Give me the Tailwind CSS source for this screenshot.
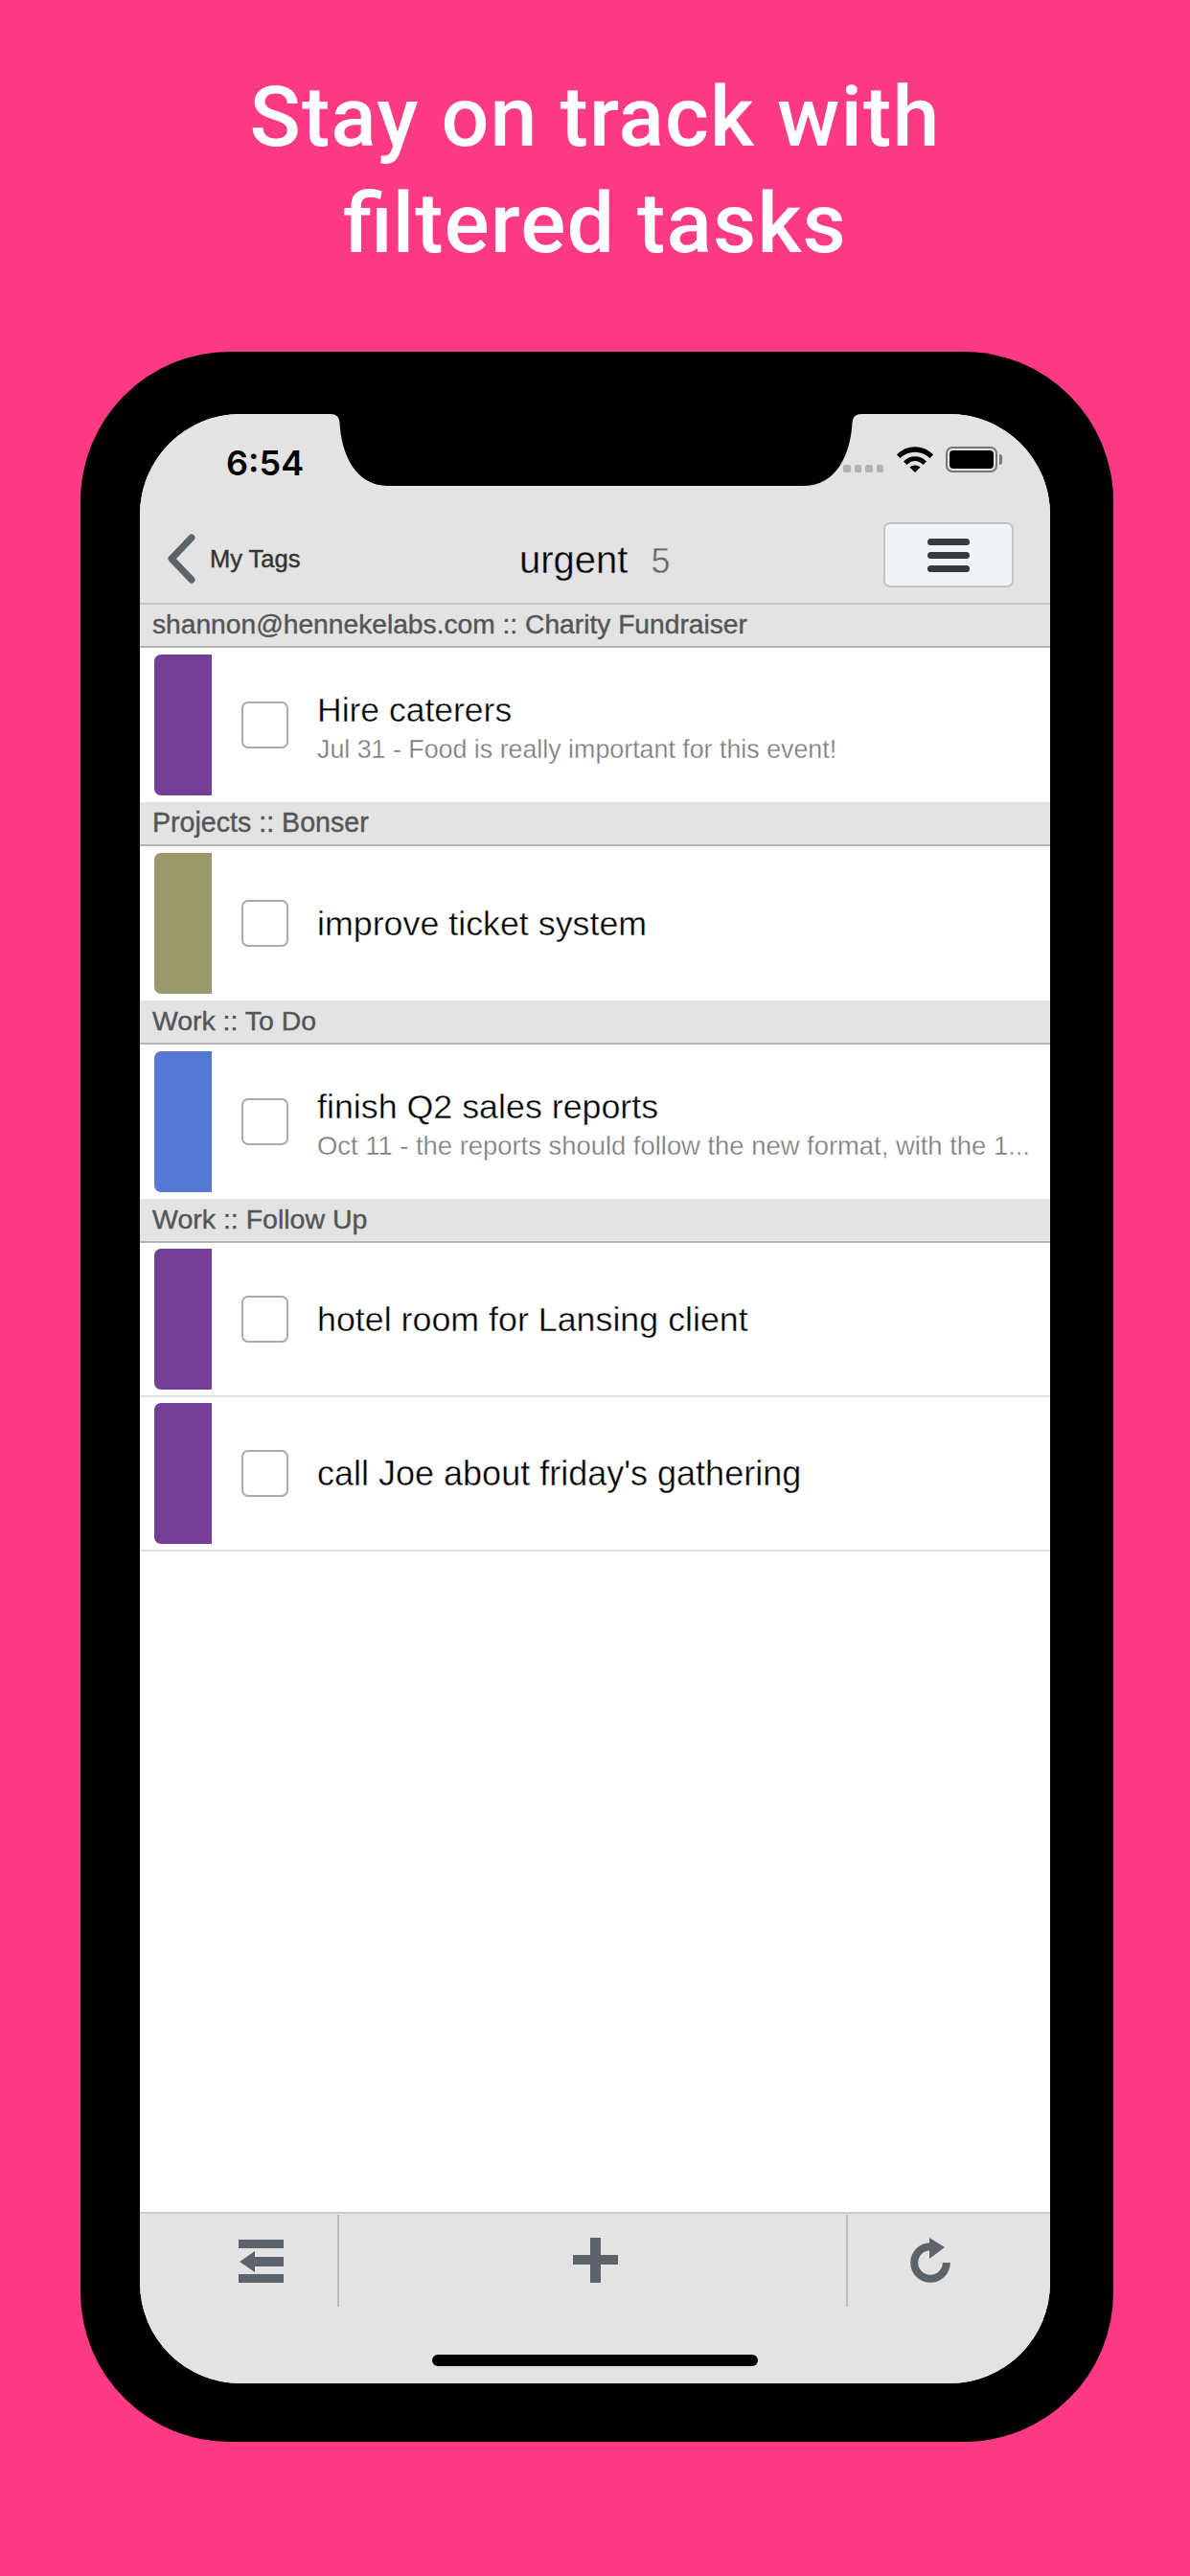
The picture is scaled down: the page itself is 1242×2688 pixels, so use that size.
<!DOCTYPE html>
<html>
<head>
<meta charset="utf-8">
<script src="https://cdn.jsdelivr.net/npm/@tailwindcss/browser@4"></script>
</head>
<body class="m-0 bg-[#ff3a85]">
<div class="relative w-[1242px] h-[2688px] overflow-hidden bg-[#ff3a85] font-['Liberation_Sans',sans-serif]">
  <h1 class="pt-[66px] h-[367px] text-center text-white text-[88px] leading-[111px] font-medium font-['Roboto',sans-serif] tracking-[1.1px]">Stay on track with<br><span class="tracking-normal">fi</span>ltered tasks</h1>

  <div class="relative mx-[84px] w-[1078px] h-[2181px] bg-black rounded-[156px] pt-[65px] px-[62px]">
    <div class="relative w-[950px] h-[2055px] bg-white rounded-[105px] overflow-hidden flex flex-col">
      <!-- status + nav -->
      <div class="h-[199px] bg-[#e3e3e3] relative shrink-0 border-b-2 border-[#c6c6c6]">
        <span class="absolute left-[90px] top-[29px] font-['Inter',sans-serif] font-semibold text-[36px] leading-[44px] text-black">6:54</span>
        <div class="absolute left-[734px] top-[53px] flex gap-[4px]">
          <i class="block size-[7.5px] rounded-[2px] bg-[#b2b2b2]"></i><i class="block size-[7.5px] rounded-[2px] bg-[#b2b2b2]"></i><i class="block size-[7.5px] rounded-[2px] bg-[#b2b2b2]"></i><i class="block size-[7.5px] rounded-[2px] bg-[#b2b2b2]"></i>
        </div>
        <svg class="absolute left-[789px] top-[33px]" width="40" height="29" viewBox="0 0 40 29"><path d="M1 9.5C11 -1.5 29 -1.5 39 9.5L35.5 13C27 4.500 13 4.500 4.500 13Z M8 16.500C14.500 9.500 25.500 9.500 32 16.500L28.500 20C23.500 14.500 16.500 14.500 11.500 20Z M14.500 22.500 C17.500 19.800 22.500 19.800 25.500 22.500L20 28Z" fill="#000"/></svg>
        <div class="absolute left-[841px] top-[34px] w-[54px] h-[27px] rounded-[7px] border-2 border-[#777] p-[2px]"><div class="h-full rounded-[4px] bg-black"></div></div>
        <div class="absolute left-[897px] top-[42px] w-[3px] h-[11px] rounded-r-[3px] bg-[#777]"></div>

        <svg class="absolute left-[28px] top-[125px]" width="30" height="52" viewBox="0 0 30 52"><path d="M26 4 5 26 26 48" fill="none" stroke="#5c636a" stroke-width="7" stroke-linecap="round" stroke-linejoin="round"/></svg>
        <span class="absolute left-[73px] top-[136px] text-[25.500px] leading-[30px] text-[#333] [-webkit-text-stroke:0.4px_#333]">My Tags</span>
        <div class="absolute left-[396px] top-[129px] flex items-baseline text-[40px] leading-[46px] [-webkit-text-stroke:0.4px_#e3e3e3]">
          <span class="text-black">urgent</span><span class="ml-[24px] text-[#666] text-[36px] [-webkit-text-stroke:0.5px_#e3e3e3]">5</span>
        </div>
        <div class="absolute left-[776px] top-[113px] w-[136px] h-[68px] rounded-[7px] border-2 border-[#c2c5c8] bg-[#f1f3f5] flex flex-col items-center justify-center gap-[7px]">
          <i class="block w-[44px] h-[7px] rounded-full bg-[#343a40]"></i><i class="block w-[44px] h-[7px] rounded-full bg-[#343a40]"></i><i class="block w-[44px] h-[7px] rounded-full bg-[#343a40]"></i>
        </div>
      </div>

      <!-- list -->
      <div class="flex-1 flex flex-col">
        <div class="h-[45px] shrink-0 bg-[#e3e3e3] border-b-2 border-[#b4b4b4] pl-[13px] text-[28.200px] leading-[41px] text-[#555] [-webkit-text-stroke:0.4px_#555]">shannon@hennekelabs.com :: Charity Fundraiser</div>
        <div class="h-[161px] shrink-0 flex items-center pl-[15px]">
          <div class="w-[60px] h-[147px] rounded-l-[7px] bg-[#733e96]"></div>
          <div class="ml-[31px] size-[49px] rounded-[7px] border-2 border-[#aaa]"></div>
          <div class="ml-[30px] min-w-0 w-[750px] pt-[4px]">
            <div class="text-[35.500px] leading-[44px] text-black [-webkit-text-stroke:0.4px_white]">Hire caterers</div>
            <div class="mt-[2px] text-[26.800px] leading-[34px] text-[#7c7c7c] [-webkit-text-stroke:0.3px_white]">Jul 31 - Food is really important for this event!</div>
          </div>
        </div>

        <div class="h-[46px] shrink-0 bg-[#e3e3e3] border-b-2 border-[#b4b4b4] pl-[13px] text-[28.600px] leading-[42px] text-[#555] [-webkit-text-stroke:0.4px_#555]">Projects :: Bonser</div>
        <div class="h-[161px] shrink-0 flex items-center pl-[15px]">
          <div class="w-[60px] h-[147px] rounded-l-[7px] bg-[#99996b]"></div>
          <div class="ml-[31px] size-[49px] rounded-[7px] border-2 border-[#aaa]"></div>
          <div class="ml-[30px] text-[35.800px] leading-[44px] text-black [-webkit-text-stroke:0.4px_white]">improve ticket system</div>
        </div>

        <div class="h-[46px] shrink-0 bg-[#e3e3e3] border-b-2 border-[#b4b4b4] pl-[13px] text-[28.400px] leading-[42px] text-[#555] [-webkit-text-stroke:0.4px_#555]">Work :: To Do</div>
        <div class="h-[161px] shrink-0 flex items-center pl-[15px]">
          <div class="w-[60px] h-[147px] rounded-l-[7px] bg-[#5578d4]"></div>
          <div class="ml-[31px] size-[49px] rounded-[7px] border-2 border-[#aaa]"></div>
          <div class="ml-[30px] min-w-0 w-[760px] pt-[4px]">
            <div class="text-[35.800px] leading-[44px] text-black [-webkit-text-stroke:0.4px_white]">finish Q2 sales reports</div>
            <div class="mt-[2px] text-[27.400px] leading-[34px] text-[#7c7c7c] whitespace-nowrap [-webkit-text-stroke:0.3px_white]">Oct 11 - the reports should follow the new format, with the 1...</div>
          </div>
        </div>

        <div class="h-[46px] shrink-0 bg-[#e3e3e3] border-b-2 border-[#b4b4b4] pl-[13px] text-[28.500px] leading-[42px] text-[#555] [-webkit-text-stroke:0.4px_#555]">Work :: Follow Up</div>
        <div class="h-[161px] shrink-0 flex items-center pl-[15px] border-b-2 border-[#e0e0e6]">
          <div class="w-[60px] h-[147px] rounded-l-[7px] bg-[#733e96]"></div>
          <div class="ml-[31px] size-[49px] rounded-[7px] border-2 border-[#aaa]"></div>
          <div class="ml-[30px] text-[35.800px] leading-[44px] text-black [-webkit-text-stroke:0.4px_white]">hotel room for Lansing client</div>
        </div>
        <div class="h-[161px] shrink-0 flex items-center pl-[15px] border-b-2 border-[#e0e0e6]">
          <div class="w-[60px] h-[147px] rounded-l-[7px] bg-[#733e96]"></div>
          <div class="ml-[31px] size-[49px] rounded-[7px] border-2 border-[#aaa]"></div>
          <div class="ml-[30px] text-[36px] leading-[44px] text-black [-webkit-text-stroke:0.4px_white]">call Joe about friday's gathering</div>
        </div>
      </div>

      <!-- toolbar -->
      <div class="relative h-[179px] shrink-0 bg-[#e3e3e3] border-t-2 border-[#cbcbcb] flex items-start pt-[1px]">
        <div class="w-[208px] h-[96px] border-r-2 border-[#bdbdbd] flex justify-center pt-[26px]">
          <svg width="47" height="45" viewBox="0 0 47 45" class="ml-[46px]"><path d="M0 0H47V9H0Z M0 36H47V45H0Z M17 18H47V28H17Z M17 12V34L1 23Z" fill="#5c636a"/></svg>
        </div>
        <div class="w-[531px] h-[96px] border-r-2 border-[#bdbdbd] flex justify-center pt-[24px]">
          <svg width="47" height="47" viewBox="0 0 47 47" class="ml-[6px]"><path d="M18 0H29V18H47V28H29V47H18V28H0V18H18Z" fill="#5c636a"/></svg>
        </div>
        <div class="flex-1 flex justify-center pt-[24px]">
          <svg width="42" height="47" viewBox="0 0 42 47" class="ml-[-40px]"><path d="M21 9.200A16.800 16.800 0 1 0 37.800 26" fill="none" stroke="#5c636a" stroke-width="8"/><path d="M20 0 36 10 20 22Z" fill="#5c636a"/></svg>
        </div>
        <div class="absolute left-[305px] top-[147px] w-[340px] h-[12px] rounded-full bg-black"></div>
      </div>
    </div>
    <svg class="absolute left-[261px] top-[65px]" width="554" height="75" viewBox="0 0 554 75"><path d="M0 0Q9 0 9.500 9C11 40 25 75 60 75L494 75C529 75 543 40 544.500 9Q545 0 554 0Z" fill="#000"/></svg>
  </div>
</div>
</body>
</html>
